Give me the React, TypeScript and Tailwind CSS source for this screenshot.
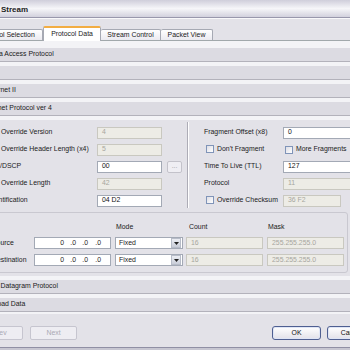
import React from "react";

const Band = ({ text, first }: { text: string; first?: boolean }) => (
  <div
    className={
      first
        ? "h-[14px] bg-[#dcdbe2] border-b border-[#b3b2bb] flex items-center pl-[14px]"
        : "h-[14px] mt-[4px] bg-[#dcdbe2] border-b border-[#b3b2bb] flex items-center pl-[14px]"
    }
  >
    {text}
  </div>
);

const Input = ({
  value,
  disabled,
  w,
}: {
  value: React.ReactNode;
  disabled?: boolean;
  w: string;
}) => (
  <div
    className={
      (disabled
        ? "bg-[#edece6] border-[#c9c8c0] text-[#a7a69e] "
        : "bg-white border-[#a3a9b5] text-[#111] ") +
      "h-[12px] border flex items-center pl-[4px] shrink-0 " +
      w
    }
  >
    {value}
  </div>
);

const Check = () => (
  <span className="w-[8px] h-[8px] border border-[#8094b8] bg-gradient-to-br from-[#dedee5] to-white shrink-0 inline-block" />
);

const Ip = () => (
  <div className="h-[12px] w-[77px] border border-[#a3a9b5] bg-white flex items-center justify-end pr-[9px] shrink-0">
    <span className="w-[12px] text-right">0</span>
    <span className="w-[12px] text-right">.0</span>
    <span className="w-[12px] text-right">.0</span>
    <span className="w-[13px] text-right">.0</span>
  </div>
);

const Select = () => (
  <div className="h-[12px] w-[68px] border border-[#a3a9b5] bg-white flex items-center pl-[3px] shrink-0 relative">
    <span className="flex-1">Fixed</span>
    <div className="h-[10px] w-[10px] mr-px bg-gradient-to-b from-[#eceef4] to-[#c9cdd8] border border-[#b7bcc8] flex items-center justify-center">
      <svg width="5" height="3" viewBox="0 0 5 3">
        <path d="M0 0 L5 0 L2.5 3 Z" fill="#222" />
      </svg>
    </div>
  </div>
);

const Btn = ({ text, disabled }: { text: string; disabled?: boolean }) => (
  <div
    className={
      disabled
        ? "h-[14px] w-[47px] border border-[#c6c5cf] rounded-[2px] bg-[#eeedf2] text-[#aaa9b2] flex items-center justify-center"
        : "h-[14px] w-[49px] border border-[#4f5f91] rounded-[3px] bg-gradient-to-b from-white to-[#e2e1e9] text-[#111] flex items-center justify-center shadow-[inset_0_0_0_1px_#dfe5f5]"
    }
  >
    {text}
  </div>
);

export default function App() {
  return (
    <div className="w-[350px] h-[350px] overflow-hidden bg-[#e3e2e8] text-[6.9px] leading-none text-[#1a1a1a] font-['Liberation_Sans',Arial,sans-serif]">
      <div className="ml-[-30px] w-[430px] flex flex-col">
        {/* Title bar */}
        <div className="h-[17px] flex items-center pl-[31px] pt-[2px] bg-gradient-to-b from-[#cfcedb] via-[#f6f6f9] to-[#d2d1dd] font-bold text-[8px] text-[#222]">
          Stream
        </div>
        <div className="h-px bg-[#9897ac]" />
        <div className="h-px bg-[#f8f8fa]" />

        {/* Tabs */}
        <div className="h-[22px] flex items-end pl-[1px] border-b border-[#a1a8ab]">
          <div className="h-[11px] w-[72px] border border-b-0 border-[#a6a9b3] rounded-t-[2px] bg-gradient-to-b from-white to-[#ebeaf0] flex items-center justify-center">
            Protocol Selection
          </div>
          <div className="h-[15px] w-[58px] mb-[-1px] border border-b-0 border-[#a6a9b3] border-t-2 border-t-[#f2ad43] rounded-t-[2px] bg-white flex items-center justify-center relative z-10">
            Protocol Data
          </div>
          <div className="h-[11px] w-[60px] border border-b-0 border-l-0 border-[#a6a9b3] rounded-t-[2px] bg-gradient-to-b from-white to-[#ebeaf0] flex items-center justify-center">
            Stream Control
          </div>
          <div className="h-[11px] w-[52px] border border-b-0 border-l-0 border-[#a6a9b3] rounded-t-[2px] bg-gradient-to-b from-white to-[#ebeaf0] flex items-center justify-center">
            Packet View
          </div>
        </div>

        {/* Panel */}
        <div className="bg-[#f3f3f6] pt-[7px] pb-[2px] flex flex-col">
          <Band text="Media Access Protocol" first />
          <Band text="" />
          <Band text="Ethernet II" />
          <Band text="Internet Protocol ver 4" />

          {/* IP content */}
          <div className="mt-[4px] bg-[#e3e2e8] pt-[6px] pb-[3px] flex flex-col">
            <div className="flex items-start pl-[19px]">
              {/* left column */}
              <div className="flex flex-col gap-[4px]">
                <div className="h-[13px] flex items-center">
                  <Check />
                  <span className="ml-[4px] w-[96px]">Override Version</span>
                  <Input value="4" disabled w="w-[65px]" />
                </div>
                <div className="h-[13px] flex items-center">
                  <Check />
                  <span className="ml-[4px] w-[96px]">Override Header Length (x4)</span>
                  <Input value="5" disabled w="w-[65px]" />
                </div>
                <div className="h-[13px] flex items-center">
                  <span className="ml-[-3px] w-[111px]">TOS/DSCP</span>
                  <Input value="00" w="w-[65px]" />
                  <div className="ml-[5px] h-[12px] w-[15px] border border-[#c3c2ca] rounded-[2px] bg-[#efeef3] text-[#9c9ba4] flex items-center justify-center">
                    ...
                  </div>
                </div>
                <div className="h-[13px] flex items-center">
                  <Check />
                  <span className="ml-[4px] w-[96px]">Override Length</span>
                  <Input value="42" disabled w="w-[65px]" />
                </div>
                <div className="h-[13px] flex items-center">
                  <span className="w-[108px]">Identification</span>
                  <Input value="04 D2" w="w-[65px]" />
                </div>
              </div>

              {/* separator */}
              <div className="ml-[5px] mt-[-4px] w-[2px] h-[86px] border-l border-[#adacb6] border-r border-r-white" />

              {/* right column */}
              <div className="ml-[15px] flex flex-col gap-[4px]">
                <div className="h-[13px] flex items-center">
                  <span className="w-[79px]">Fragment Offset (x8)</span>
                  <Input value="0" w="w-[90px]" />
                </div>
                <div className="h-[13px] flex items-center">
                  <span className="ml-[2px]">
                    <Check />
                  </span>
                  <span className="ml-[3px] w-[68px]">Don&apos;t Fragment</span>
                  <Check />
                  <span className="ml-[3px]">More Fragments</span>
                </div>
                <div className="h-[13px] flex items-center">
                  <span className="w-[79px]">Time To Live (TTL)</span>
                  <Input value="127" w="w-[90px]" />
                </div>
                <div className="h-[13px] flex items-center">
                  <span className="w-[79px]">Protocol</span>
                  <Input value="11" disabled w="w-[90px]" />
                </div>
                <div className="h-[13px] flex items-center">
                  <span className="ml-[2px]">
                    <Check />
                  </span>
                  <span className="ml-[3px] w-[66px]">Override Checksum</span>
                  <Input value="36 F2" disabled w="w-[58px]" />
                </div>
              </div>
            </div>

            {/* group box */}
            <div className="mt-[4px] ml-[18px] w-[360px] border border-[#c9c8d0] rounded-[3px] pt-[10px] pb-[6px] pl-[3px] flex flex-col">
              <div className="h-[8px] flex items-center">
                <span className="w-[42px]" />
                <span className="w-[81px]" />
                <span className="w-[72px] pl-[1px]">Mode</span>
                <span className="w-[81px] pl-[2px]">Count</span>
                <span>Mask</span>
              </div>
              <div className="mt-[6px] h-[12px] flex items-center">
                <span className="w-[42px]">Source</span>
                <Ip />
                <span className="w-[4px]" />
                <Select />
                <span className="w-[3px]" />
                <Input value="16" disabled w="w-[77px]" />
                <span className="w-[4px]" />
                <Input value="255.255.255.0" disabled w="w-[77px]" />
              </div>
              <div className="mt-[5px] h-[12px] flex items-center">
                <span className="w-[42px]">Destination</span>
                <Ip />
                <span className="w-[4px]" />
                <Select />
                <span className="w-[3px]" />
                <Input value="16" disabled w="w-[77px]" />
                <span className="w-[4px]" />
                <Input value="255.255.255.0" disabled w="w-[77px]" />
              </div>
            </div>
          </div>

          <Band text="User Datagram Protocol" />
          <Band text="Payload Data" />
        </div>

        {/* footer */}
        <div className="h-[33px] pt-[12px] flex items-start pl-[6px] pr-[24px]">
          <Btn text="Prev" disabled />
          <span className="w-[7px]" />
          <Btn text="Next" disabled />
          <span className="flex-1" />
          <Btn text="OK" />
          <span className="w-[6px]" />
          <Btn text="Cancel" />
        </div>
        <div className="h-px bg-[#908fa4]" />
        <div className="h-[10px] bg-[#c7c6d1]" />
      </div>
    </div>
  );
}
